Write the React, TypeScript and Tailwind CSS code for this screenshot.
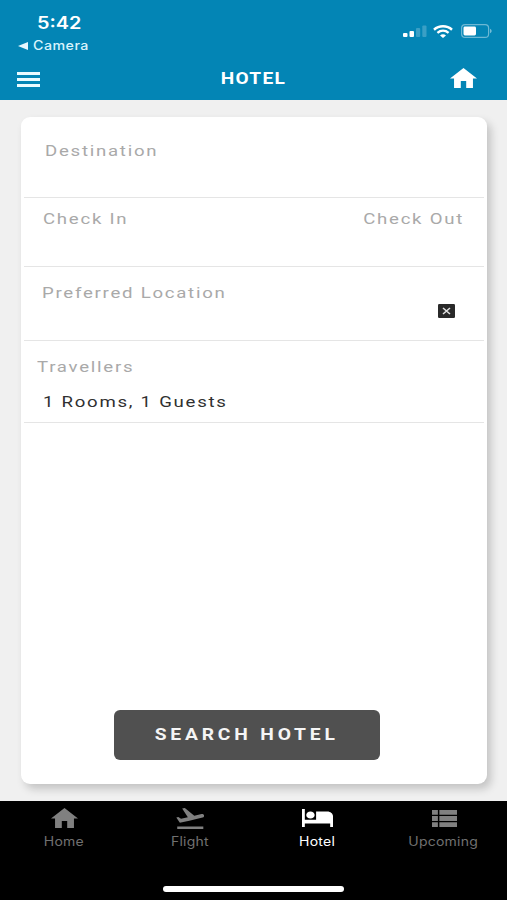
import type { ReactNode } from 'react';

type IconProps = { box: string; className: string; children: ReactNode };

function Icon({ box, className, children }: IconProps) {
  return (
    <svg viewBox={box} preserveAspectRatio="none" fill="currentColor" className={`block shrink-0 ${className}`}>
      {children}
    </svg>
  );
}

function HomeIcon({ className }: { className: string }) {
  return (
    <Icon box="2 3 20 17" className={className}>
      <path d="M10 20v-6h4v6h5v-8h3L12 3 2 12h3v8z" />
    </Icon>
  );
}

function FlightIcon() {
  return (
    <Icon box="1.6 3.6 20.4 17.4" className="mr-px h-[21px] w-[28px]">
      <path d="M2.5 19h19v2h-19zm19.57-9.36c-.21-.8-1.04-1.28-1.84-1.06L14.92 10l-6.9-6.43-1.93.51 4.14 7.17-4.97 1.33-1.97-1.54-1.45.39 1.82 3.16.77 1.33 1.6-.43 5.31-1.42 4.35-1.16L21 11.49c.81-.23 1.28-1.05 1.07-1.85z" />
    </Icon>
  );
}

function HotelIcon() {
  return (
    <Icon box="1 5 22 15" className="h-[18px] w-[31px]">
      <path d="M7 13c1.66 0 3-1.34 3-3S8.66 7 7 7s-3 1.34-3 3 1.34 3 3 3zm12-6h-8v7H3V5H1v15h2v-3h18v3h2v-9c0-2.21-1.79-4-4-4z" />
    </Icon>
  );
}

function ListIcon() {
  return (
    <Icon box="4 5 17 14" className="ml-px h-[17px] w-[25px]">
      <path d="M4 14h4v-4H4v4zm0 5h4v-4H4v4zM4 9h4V5H4v4zm5 5h12v-4H9v4zm0 5h12v-4H9v4zM9 5v4h12V5H9z" />
    </Icon>
  );
}

function Label({ children, className = 'text-[#a9a9a9]' }: { children: ReactNode; className?: string }) {
  return (
    <span className={`block w-max origin-left scale-x-[1.2] text-[15.5px] leading-5 tracking-[1.45px] whitespace-nowrap ${className}`}>
      {children}
    </span>
  );
}

function Tab({ label, icon, active = false }: { label: string; icon: ReactNode; active?: boolean }) {
  return (
    <button className={`flex flex-1 flex-col items-center ${active ? 'text-white' : 'text-[#808080]'}`}>
      <span className="flex h-[22px] items-center">{icon}</span>
      <span className={`mt-[5px] mr-px scale-x-[1.12] text-[12.5px] leading-4 tracking-[0.2px] font-['Inter',sans-serif] ${active ? '' : 'text-[#707070]'}`}>{label}</span>
    </button>
  );
}

export default function App() {
  return (
    <div className="flex h-[900px] w-[507px] flex-col overflow-hidden bg-[#f0f0f0] font-['Roboto',sans-serif]">
      <header className="h-[100px] shrink-0 bg-[#0385b5] text-white">
        <div className="flex h-[56px] justify-between pt-[13px] pr-[15px] pl-[18px] font-['Inter',sans-serif]">
          <div>
            <div className="ml-[19px] w-max origin-left scale-x-[1.17] text-[17px] leading-5 font-semibold">5:42</div>
            <div className="mt-[4px] flex items-center">
              <svg viewBox="0 0 10 8" className="h-[8px] w-[10px]" fill="#e6f8ff">
                <path d="M0 4 10 0v8z" />
              </svg>
              <span className="ml-[5px] origin-left scale-x-[1.14] text-[12.5px] leading-[18px] font-medium tracking-[0.4px] text-[#d9f3fc]">Camera</span>
            </div>
          </div>
          <div className="mt-[10px] flex h-[16px] items-center">
            <svg viewBox="0 0 24 12" className="h-[12px] w-[24px]" fill="#fff">
              <rect x="0" y="8" width="4.5" height="4" rx="1" />
              <rect x="6.5" y="6" width="4.5" height="6" rx="1" />
              <rect x="13" y="3" width="4.2" height="9" rx="1" opacity=".22" />
              <rect x="19.3" y="0.5" width="4.2" height="11.5" rx="1" opacity=".22" />
            </svg>
            <svg viewBox="0 0 20 13" preserveAspectRatio="none" className="ml-[6px] h-[13px] w-[20px]" fill="none" stroke="#fff">
              <path d="M1 4.7C6 .2 14 .2 19 4.7" strokeWidth="2.5" />
              <path d="M4.4 7.9c3.3-2.9 7.9-2.9 11.2 0" strokeWidth="2.3" />
              <path d="M7 10.4c1.8-1.6 4.2-1.6 6 0L10 13z" fill="#fff" stroke="none" />
            </svg>
            <svg viewBox="0 0 31 14" className="ml-[8px] h-[14px] w-[31px]">
              <rect x=".6" y=".6" width="27" height="12.8" rx="3.5" fill="none" stroke="#fff" strokeOpacity=".42" strokeWidth="1.2" />
              <path d="M29 4.8c2.2.8 2.2 3.6 0 4.4z" fill="#fff" opacity=".45" />
              <rect x="2.5" y="2.6" width="12.5" height="8.8" rx="1.4" fill="#fff" />
            </svg>
          </div>
        </div>
        <div className="flex h-[44px] items-center justify-between pr-[30px] pl-[17px]">
          <button className="flex w-[39px] flex-col gap-[3px] pt-[3px]">
            <span className="h-[3px] w-[23px] bg-[#e9fbff]" />
            <span className="h-[3px] w-[23px] bg-[#e9fbff]" />
            <span className="h-[3px] w-[23px] bg-[#e9fbff]" />
          </button>
          <h1 className="scale-x-[1.19] pt-[2px] text-[16px] leading-5 font-bold tracking-[1.1px]">HOTEL</h1>
          <HomeIcon className="h-[20px] w-[27px]" />
        </div>
      </header>

      <main className="flex-1 pt-[17px] pl-[21px]">
        <section className="flex h-[667px] w-[466px] flex-col rounded-[9px] bg-white px-[3px] shadow-[4px_5px_8px_0px_rgba(0,0,0,0.19)]">
          <div className="h-[81px] shrink-0 border-b border-[#e5e5e5] pt-[24px] pl-[21px]">
            <Label>Destination</Label>
          </div>
          <div className="flex h-[69px] shrink-0 justify-between border-b border-[#e5e5e5] pt-[11px] pr-[20px] pl-[19px]">
            <Label>Check In</Label>
            <Label className="origin-right text-[#a9a9a9]">Check Out</Label>
          </div>
          <div className="flex h-[74px] shrink-0 justify-between border-b border-[#e5e5e5] pt-[16px] pr-[29px] pl-[18px]">
            <Label>Preferred Location</Label>
            <svg viewBox="0 0 17 14" className="mt-[21px] h-[14px] w-[17px]">
              <rect width="17" height="14" rx="1.2" fill="#292929" />
              <path d="m5 4 7 6m0-6-7 6" stroke="#e2e2e2" strokeWidth="1.6" />
            </svg>
          </div>
          <div className="h-[82px] shrink-0 border-b border-[#e5e5e5] pt-[16px] pl-[13px]">
            <Label>Travellers</Label>
            <Label className="mt-[15px] ml-[6px] text-[#303030]">1 Rooms, 1 Guests</Label>
          </div>
          <button className="mt-auto mb-[24px] ml-[90px] flex h-[50px] w-[266px] items-center justify-center rounded-[6px] bg-[#505050] text-[#f5f5f5]">
            <span className="mr-px scale-x-[1.2] text-[16px] leading-5 font-bold tracking-[3.2px] whitespace-nowrap">SEARCH HOTEL</span>
          </button>
        </section>
      </main>

      <nav className="flex h-[99px] shrink-0 flex-col items-center bg-black">
        <div className="flex w-full flex-1 items-start pt-[6px] pl-px">
          <Tab label="Home" icon={<HomeIcon className="h-[20px] w-[27px]" />} />
          <Tab label="Flight" icon={<FlightIcon />} />
          <Tab label="Hotel" icon={<HotelIcon />} active />
          <Tab label="Upcoming" icon={<ListIcon />} />
        </div>
        <div className="mb-[8px] h-[6px] w-[181px] rounded-full bg-white" />
      </nav>
    </div>
  );
}
